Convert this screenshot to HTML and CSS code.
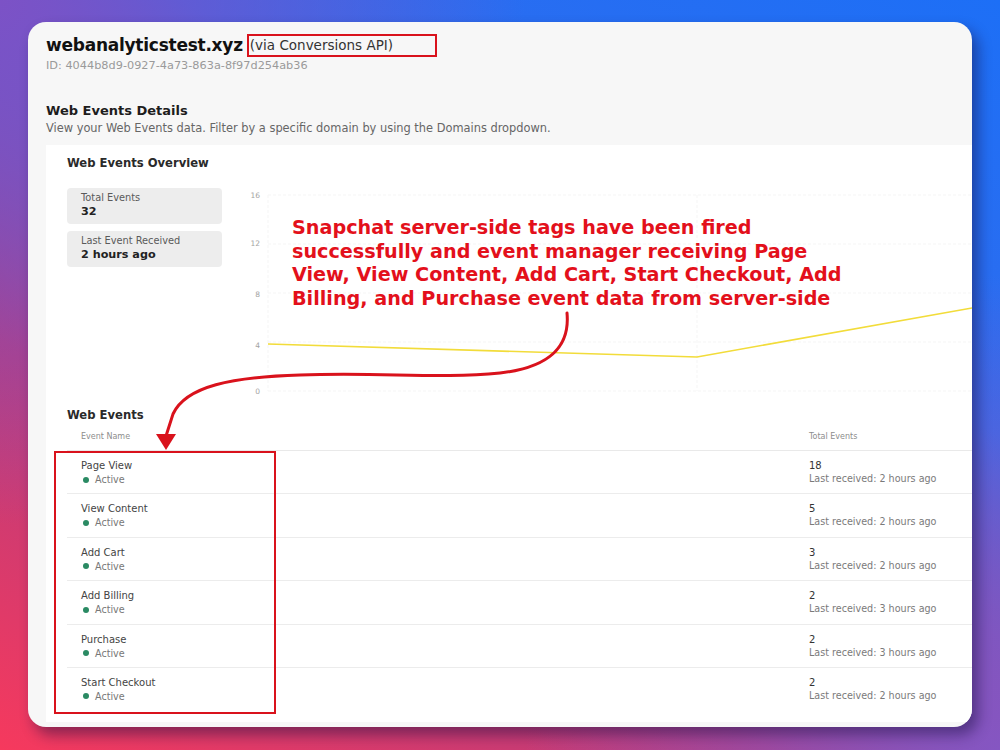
FILE: index.html
```html
<!DOCTYPE html>
<html lang="en">
<head>
    <meta charset="UTF-8">
    <title>Web Events Details</title>
    <link rel="stylesheet" href="styles.css">
</head>
<body>
    <div class="screen">
        <div class="card">
            <div class="page-head">
                <h1>webanalyticstest.xyz <span class="via">(via Conversions API)</span></h1>
                <div class="pixel-id">ID: 4044b8d9-0927-4a73-863a-8f97d254ab36</div>
            </div>
            <div class="details-head">
                <h2>Web Events Details</h2>
                <p>View your Web Events data. Filter by a specific domain by using the Domains dropdown.</p>
            </div>
            <div class="panel">
                <h3>Web Events Overview</h3>
                <div class="overview">
                    <div class="stats">
                        <div class="stat">
                            <span class="stat-label">Total Events</span>
                            <span class="stat-value">32</span>
                        </div>
                        <div class="stat">
                            <span class="stat-label">Last Event Received</span>
                            <span class="stat-value">2 hours ago</span>
                        </div>
                    </div>
                    <div class="chart">
                        <svg width="732" height="215" viewBox="0 0 732 215">
                            <g stroke="#f5f5f5" stroke-width="1" stroke-dasharray="3 2">
                                <line x1="28" y1="10" x2="732" y2="10"/>
                                <line x1="28" y1="59" x2="732" y2="59"/>
                                <line x1="28" y1="108" x2="732" y2="108"/>
                                <line x1="28" y1="157" x2="732" y2="157"/>
                                <line x1="28" y1="206" x2="732" y2="206"/>
                                <line x1="28" y1="10" x2="28" y2="206"/>
                                <line x1="457" y1="10" x2="457" y2="206"/>
                            </g>
                            <g class="axis" text-anchor="end">
                                <text x="20" y="13">16</text>
                                <text x="20" y="61">12</text>
                                <text x="20" y="112">8</text>
                                <text x="20" y="163">4</text>
                                <text x="20" y="209">0</text>
                            </g>
                            <polyline points="28,159 457,172 732,123" fill="none" stroke="#f2dc3a" stroke-width="1.6"/>
                        </svg>
                    </div>
                </div>
                <h3 class="events-title">Web Events</h3>
                <div class="events">
                    <div class="events-head">
                        <span>Event Name</span>
                        <span class="col-total">Total Events</span>
                    </div>
                    <div class="event-row">
                        <div class="event-name">Page View<span class="status">Active</span></div>
                        <div class="event-total">18<span class="received">Last received: 2 hours ago</span></div>
                    </div>
                    <div class="event-row">
                        <div class="event-name">View Content<span class="status">Active</span></div>
                        <div class="event-total">5<span class="received">Last received: 2 hours ago</span></div>
                    </div>
                    <div class="event-row">
                        <div class="event-name">Add Cart<span class="status">Active</span></div>
                        <div class="event-total">3<span class="received">Last received: 2 hours ago</span></div>
                    </div>
                    <div class="event-row">
                        <div class="event-name">Add Billing<span class="status">Active</span></div>
                        <div class="event-total">2<span class="received">Last received: 3 hours ago</span></div>
                    </div>
                    <div class="event-row">
                        <div class="event-name">Purchase<span class="status">Active</span></div>
                        <div class="event-total">2<span class="received">Last received: 3 hours ago</span></div>
                    </div>
                    <div class="event-row">
                        <div class="event-name">Start Checkout<span class="status">Active</span></div>
                        <div class="event-total">2<span class="received">Last received: 2 hours ago</span></div>
                    </div>
                </div>
            </div>
        </div>

        <!-- annotation layer drawn over the screenshot -->
        <p class="note">Snapchat server-side tags have been fired<br>successfully and event manager receiving Page<br>View, View Content, Add Cart, Start Checkout, Add<br>Billing, and Purchase event data from server-side</p>
        <svg class="arrow" width="1000" height="750" viewBox="0 0 1000 750">
            <path d="M567,313 C570,345 552,367 500,373 C440,379 380,372 300,375 C232,377 186,386 173,414 L166,436" fill="none" stroke="#d9121c" stroke-width="3" stroke-linecap="round"/>
            <polygon points="156,434 176,434 166,450" fill="#d9121c"/>
        </svg>
        <div class="mark-box"></div>
    </div>
</body>
</html>
```

FILE: styles.css
```css
* {
    box-sizing: border-box;
}
body {
    margin: 0;
    font-family: 'DejaVu Sans', 'Open Sans', sans-serif;
}
.screen {
    position: relative;
    width: 1000px;
    height: 750px;
    overflow: hidden;
    padding: 22px 28px 0 28px;
    background:
        radial-gradient(circle at 100% 100%, #8556c2 0, rgba(133, 86, 194, 0) 38%),
        radial-gradient(circle at 0% 0%, #7c52c6 0, rgba(124, 82, 198, 0) 42%),
        linear-gradient(208deg, #1d6ff6 0%, #2f6cee 34%, #b63c7e 68%, #f6395d 100%);
}
.card {
    height: 705px;
    background-color: #f7f7f7;
    border-radius: 18px;
    overflow: hidden;
    padding: 11px 0 0 18px;
    display: flex;
    flex-direction: column;
    box-shadow: 6px 8px 14px rgba(20, 10, 60, 0.45);
}
h1 {
    margin: 0;
    height: 24px;
    line-height: 24px;
    font-size: 17px;
    font-weight: 700;
    color: #111;
    letter-spacing: -0.25px;
    display: flex;
    align-items: center;
    gap: 3px;
}
.via {
    font-size: 13.5px;
    font-weight: 400;
    line-height: 19px;
    letter-spacing: 0;
    color: #333;
    border: 2px solid #d9121c;
    padding: 0 2px 0 1px;
    margin-left: 1px;
    width: 190px;
}
.pixel-id {
    margin-top: 2px;
    line-height: 14px;
    font-size: 11.3px;
    color: #9a9a9a;
}
.details-head {
    margin-top: 29px;
}
h2 {
    margin: 0;
    line-height: 18px;
    font-size: 13px;
    font-weight: 700;
    color: #1d1d1d;
}
.details-head p {
    margin: 1px 0 0;
    line-height: 14px;
    font-size: 11.4px;
    color: #666;
}
.panel {
    flex: 1;
    margin-top: 10px;
    margin-bottom: 5px;
    background-color: white;
    padding: 10px 0 0 21px;
}
h3 {
    margin: 0;
    line-height: 16px;
    font-size: 11.6px;
    font-weight: 600;
    color: #2a2a2a;
}
.overview {
    display: flex;
    gap: 18px;
    margin-top: 17px;
}
.stats {
    width: 155px;
    display: flex;
    flex-direction: column;
    gap: 7px;
}
.stat {
    background-color: #ededed;
    border-radius: 4px;
    padding: 3px 14px 4px;
    display: flex;
    flex-direction: column;
    height: 36px;
}
.stat-label {
    font-size: 9.8px;
    line-height: 13px;
    color: #5a5a5a;
}
.stat-value {
    font-size: 11.2px;
    font-weight: 700;
    color: #222;
    line-height: 16px;
}
.chart {
    flex: 1;
    margin-top: -3px;
}
.chart svg {
    display: block;
}
.axis text {
    font-size: 7.5px;
    fill: #a3a3a3;
}
.events-title {
    margin-top: 7px;
}
.events-head {
    display: grid;
    grid-template-columns: 742px 1fr;
    padding-left: 14px;
    padding-top: 8px;
    height: 28px;
    line-height: 12px;
    border-bottom: 1px solid #e9e9e9;
    font-size: 8px;
    color: #8d8d8d;
}
.col-total {
    margin-left: -14px;
}
.event-row {
    display: grid;
    grid-template-columns: 742px 1fr;
    padding-left: 14px;
    height: 43.4px;
    border-bottom: 1px solid #ececec;
    padding-top: 8px;
}
.event-row:last-child {
    border-bottom: none;
}
.event-name,
.event-total {
    display: flex;
    flex-direction: column;
    font-size: 10px;
    line-height: 13px;
    color: #444;
}
.event-total {
    margin-left: -14px;
    color: #333;
}
.status {
    font-size: 9.6px;
    color: #777;
    padding-left: 14px;
    position: relative;
    line-height: 15px;
}
.status::before {
    content: "";
    position: absolute;
    left: 2px;
    top: 4.5px;
    width: 6px;
    height: 6px;
    border-radius: 50%;
    background-color: #2a8a63;
}
.received {
    font-size: 9.6px;
    color: #7a7a7a;
}
.note {
    position: absolute;
    left: 292px;
    top: 216px;
    margin: 0;
    font-family: 'DejaVu Sans', 'Liberation Sans', sans-serif;
    font-weight: 700;
    font-size: 19.2px;
    line-height: 23.6px;
    color: #e3101b;
    white-space: nowrap;
}
.arrow {
    position: absolute;
    left: 0;
    top: 0;
}
.mark-box {
    position: absolute;
    left: 54px;
    top: 451px;
    width: 222px;
    height: 263px;
    border: 2px solid #d9121c;
}
```
